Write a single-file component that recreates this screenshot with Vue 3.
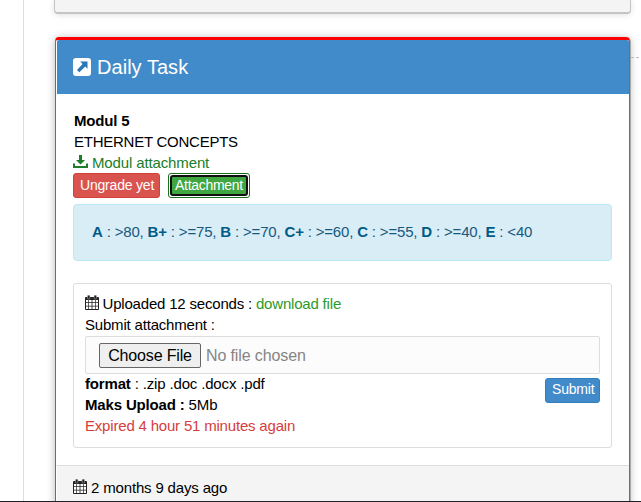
<script setup>
import { h } from 'vue'

const grades = [
  ['A', '>80'], ['B+', '>=75'], ['B', '>=70'], ['C+', '>=60'],
  ['C', '>=55'], ['D', '>=40'], ['E', '<40'],
]

const CalendarIcon = () => h('svg', { viewBox: '0 0 14 15' }, [
  h('rect', { y: 2, width: 14, height: 13, rx: 1, fill: '#222' }),
  h('path', { d: 'M1 5h2.3v2.3H1zm3 0h2.6v2.3H4zm3.4 0H10v2.3H7.4zm3.3 0H13v2.3h-2.3zM1 8h2.3v2.7H1zm3 0h2.6v2.7H4zm3.4 0H10v2.7H7.4zm3.3 0H13v2.7h-2.3zM1 11.4h2.3V14H1zm3 0h2.6V14H4zm3.4 0H10V14H7.4zm3.3 0H13V14h-2.3z', fill: '#fff' }),
  h('rect', { x: 2.5, y: 0.3, width: 2.4, height: 3.7, rx: 0.8, fill: '#222', stroke: '#aaa', 'stroke-width': 0.6 }),
  h('rect', { x: 9.1, y: 0.3, width: 2.4, height: 3.7, rx: 0.8, fill: '#222', stroke: '#aaa', 'stroke-width': 0.6 }),
])
</script>

<template>
  <div class="page">
    <aside class="rail"></aside>
    <main class="timeline">
      <section class="previous"></section>
      <section class="panel">
        <header class="heading">
          <svg class="share" viewBox="0 0 18 18"><rect width="18" height="18" rx="3" fill="#fff" /><path d="M7.2 3.5h7.3v7.3l-2.3-2.3-5.9 5.7-2.3-2.3 5.6-5.9z" fill="#2878b8" /></svg>
          <h4>Daily Task</h4>
        </header>
        <div class="body">
          <div class="title"><b>Modul 5</b></div>
          <div class="course">ETHERNET CONCEPTS</div>
          <a class="module"><svg class="download" viewBox="0 0 15 14"><path d="M6 0h3v5h3L7.5 9.5 3 5h3zM0 8.5h2V11h11V8.5h2V13H0z" fill="currentColor" /></svg><span>Modul attachment</span></a>
          <div class="actions"><button class="btn danger">Ungrade yet</button><button class="btn success"><span>Attachment</span></button></div>
          <div class="alert"><template v-for="(g, i) in grades" :key="g[0]"><b>{{ g[0] }}</b> : {{ g[1] }}<template v-if="i < grades.length - 1">, </template></template></div>
          <form class="upload">
            <div class="row">
              <CalendarIcon class="calendar" />
              <span>Uploaded 12 seconds : <a class="file-link">download file</a></span>
            </div>
            <div>Submit attachment :</div>
            <div class="file"><button type="button" class="choose">Choose File</button><span>No file chosen</span></div>
            <div class="details">
              <div>
                <div><b>format</b> : .zip .doc .docx .pdf</div>
                <div><b>Maks Upload :</b> 5Mb</div>
                <div class="expired">Expired 4 hour 51 minutes again</div>
              </div>
              <button type="button" class="btn primary">Submit</button>
            </div>
          </form>
        </div>
        <footer class="footer">
          <CalendarIcon class="calendar" />
          <span>2 months 9 days ago</span>
        </footer>
      </section>
    </main>
    <div class="connector"></div>
  </div>
</template>

<style>
body { margin: 0; background: #fff; }
</style>

<style scoped>
* { box-sizing: border-box; }
.page { display: flex; width: 641px; height: 502px; overflow: hidden; border-bottom: 1px solid #202124; font: 15px/21px "Liberation Sans", Arial, sans-serif; letter-spacing: -.19px; color: #000; background: #fff; }
.rail { flex: 0 0 24px; border-right: 1px solid #ddd; }
.timeline { flex: 0 0 577px; margin-left: 30px; }
.previous { height: 14px; background: #f4f4f4; border: 1px solid #c4c4c4; border-top: 0; border-bottom-width: 2px; border-radius: 0 0 4px 4px; box-shadow: 0 1px 6px rgba(0,0,0,.12); }
.panel { height: 482px; margin: 23px 1px 0 1px; display: flex; flex-direction: column; border: 1px solid #337fb8; border-top: 3px solid #f00; border-radius: 4px; box-shadow: 1px 1px 0 #aaa, 0 1px 8px rgba(0,0,0,.28); background: #fff; }
.heading { flex: 0 0 54px; margin-left: 1px; padding-left: 16px; display: flex; align-items: center; gap: 6px; background: #428bca; color: #fff; border-radius: 2px 2px 0 0; }
.share { width: 18px; height: 18px; }
h4 { margin: 0; font-size: 20px; line-height: 24px; font-weight: 400; letter-spacing: .04px; }
.body { flex: 0 0 371px; padding: 16px 17px 0 17px; }
.title, .course { padding-left: 1px; }
.course { letter-spacing: -.25px; }
.module { display: flex; color: #207d29; gap: 4px; letter-spacing: -.13px; }
.download { width: 15px; height: 14px; margin-top: 3px; }
.actions { display: flex; gap: 8px; height: 25px; }
.btn { height: 25px; padding: 0 6px 2px; border: 1px solid #d43f3a; border-radius: 3px; background: #d9534f; color: #fff; font: 14px/21px "Liberation Sans", Arial, sans-serif; letter-spacing: -.2px; white-space: nowrap; }
.danger { width: 87px; padding: 0 6px; }
.success { width: 82px; padding: 1px; border: 1px solid #18701d; background: #fff; letter-spacing: -.3px; }
.success span { display: block; height: 21px; border: 2px solid #101010; border-radius: 3px; background: #40a640; line-height: 16px; }
.alert { height: 57px; margin-top: 6px; padding: 16px 18px; border: 1px solid #bce8f1; border-radius: 4px; background: #d9edf7; color: #17587d; letter-spacing: -.175px; }
.alert b { color: #005b87; }
.upload { height: 165px; margin-top: 22px; padding: 9px 11px; border: 1px solid #ddd; border-radius: 3px; }
.row, .footer { display: flex; gap: 4px; }
.row { gap: 3.5px; }
.calendar { width: 14px; height: 15px; margin-top: 2px; }
.file-link { color: #2b9a2b; }
.file { height: 38px; margin-top: 1px; padding: 1px 13px 0; display: flex; align-items: center; gap: 5px; border: 1px solid #ddd; border-radius: 2px; color: #858585; background: #fcfcfc; font-size: 16px; letter-spacing: -.12px; }
.file span { margin-top: -1px; }
.choose { width: 102px; height: 25px; padding: 0 0 1px; border: 1px solid #666; border-radius: 2px; background: #efefef; color: #000; font: 16px/21px "Liberation Sans", Arial, sans-serif; letter-spacing: -.15px; }
.details { display: flex; justify-content: space-between; align-items: flex-start; letter-spacing: -.16px; }
.details > div { margin-top: -1px; }
.primary { width: 55px; margin-top: 4px; border-color: #357ebd; background: #428bca; letter-spacing: -.2px; }
.expired { color: #d53d3d; letter-spacing: -.19px; }
.footer { flex: 0 0 53px; margin-left: 1px; padding: 11px 16px; border-top: 1px solid #ddd; background: #f4f4f4; letter-spacing: -.16px; }
.connector { flex: 1; height: 58px; background: repeating-linear-gradient(to right, #bbb 0 3px, transparent 3px 5px) 0 57px / 100% 1px no-repeat; }
</style>
